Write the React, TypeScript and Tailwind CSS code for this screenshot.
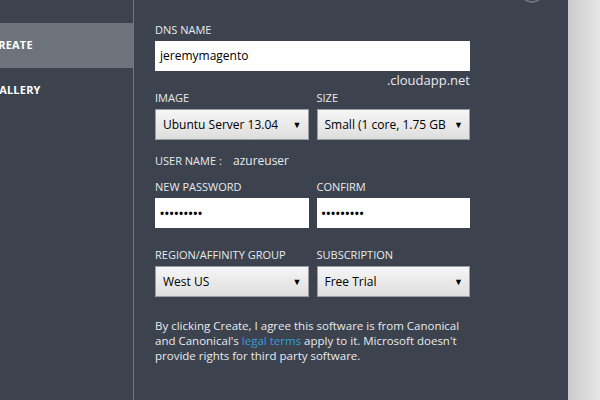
import React from "react";

const font = { fontFamily: '"Open Sans", "Noto Sans", sans-serif' };

const Label = ({ children, className = "" }: { children: React.ReactNode; className?: string }) => (
  <div className={`text-[11px] leading-[14px] text-[#e8eaed] uppercase ${className}`}>{children}</div>
);

const Select = ({ value }: { value: string }) => (
  <div className="mt-[4px] h-[31px] flex items-center justify-between border border-[#9a9ea4] bg-gradient-to-b from-[#f6f6f6] to-[#dedede] pl-[7px] pr-[6px]">
    <span className="text-[12px] text-black whitespace-nowrap overflow-hidden">{value}</span>
    <span className="text-[9px] text-black ml-[6px]">▼</span>
  </div>
);

const Input = ({ value, password = false }: { value: string; password?: boolean }) => (
  <div className="mt-[4px] h-[30px] bg-white flex items-center pl-[5px]">
    <span className={`text-black ${password ? "text-[11px] font-bold tracking-[0.6px]" : "text-[12px]"}`}>{value}</span>
  </div>
);

export default function App() {
  return (
    <div className="w-[600px] h-[400px] flex bg-[#3c434e] overflow-hidden relative" style={font}>
      {/* close button circle, cut off at top */}
      <div className="absolute left-[519px] top-[-23px] w-[26px] h-[26px] rounded-full border-2 border-[#6a717b]" />

      {/* Sidebar */}
      <div className="w-[134px] shrink-0 border-r border-[#70767e] pt-[23px]">
        <div className="h-[45px] bg-[#6d737b] flex items-center">
          <span className="ml-[-9px] text-[11px] font-bold text-white tracking-[0.2px]">CREATE</span>
        </div>
        <div className="h-[45px] flex items-center">
          <span className="ml-[-9px] text-[11px] font-bold text-white tracking-[0.2px]">GALLERY</span>
        </div>
      </div>

      {/* Form */}
      <div className="w-[434px] shrink-0 pl-[21px] pt-[23px]">
        <div className="w-[315px]">
          <Label>DNS Name</Label>
          <Input value="jeremymagento" />
          <div className="text-right text-[13px] leading-[16px] mt-[1px] text-[#e8eaed]">.cloudapp.net</div>

          <div className="grid grid-cols-2 gap-x-[8px] mt-[3px]">
            <div>
              <Label>Image</Label>
              <Select value="Ubuntu Server 13.04" />
            </div>
            <div>
              <Label>Size</Label>
              <Select value="Small (1 core, 1.75 GB r" />
            </div>
          </div>

          <div className="mt-[14px] flex text-[11px] leading-[14px] text-[#e8eaed]">
            <span className="w-[78px]">USER NAME :</span>
            <span className="text-[12px]">azureuser</span>
          </div>

          <div className="grid grid-cols-2 gap-x-[8px] mt-[12px]">
            <div>
              <Label>New Password</Label>
              <Input value="•••••••••" password />
            </div>
            <div>
              <Label>Confirm</Label>
              <Input value="•••••••••" password />
            </div>
          </div>

          <div className="grid grid-cols-2 gap-x-[8px] mt-[20px]">
            <div>
              <Label>Region/Affinity Group</Label>
              <Select value="West US" />
            </div>
            <div>
              <Label>Subscription</Label>
              <Select value="Free Trial" />
            </div>
          </div>

          <p className="mt-[21px] text-[11.5px] leading-[15px] text-[#e8eaed] w-[310px]">
            By clicking Create, I agree this software is from Canonical and Canonical's{" "}
            <span className="text-[#3a9ad9]">legal terms</span> apply to it. Microsoft doesn't provide rights for third
            party software.
          </p>
        </div>
      </div>

      {/* Right grey edge */}
      <div className="flex-1 bg-gradient-to-r from-[#cbcbcb] to-[#e6e6e6]" />
    </div>
  );
}
